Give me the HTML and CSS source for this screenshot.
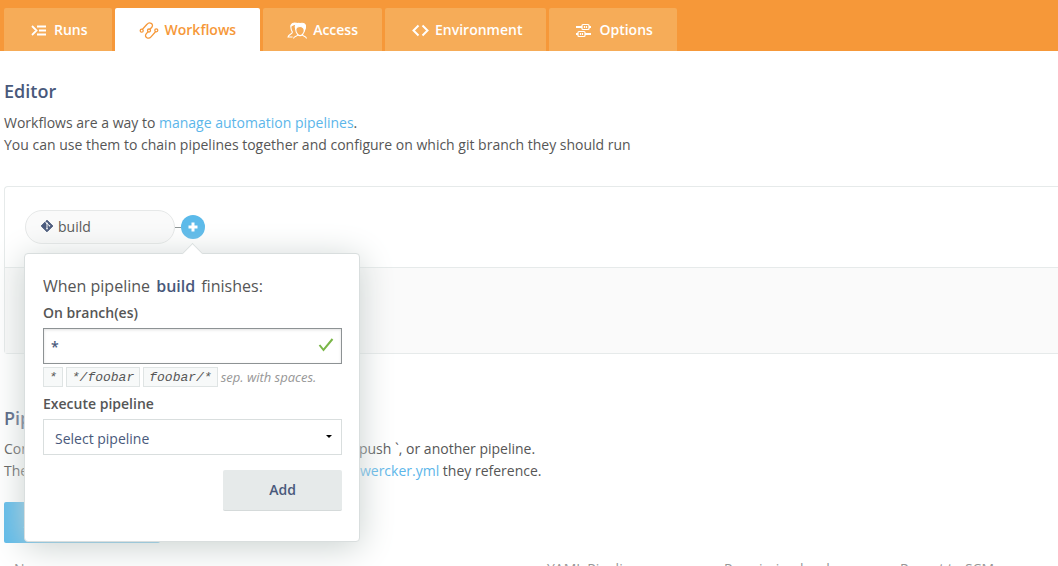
FILE: index.html
```html
<!DOCTYPE html>
<html lang="en">
<head>
<meta charset="utf-8">
<title>Workflows</title>
<link rel="stylesheet" href="styles.css">
</head>
<body>
<nav class="tabs" aria-label="Application">
  <a class="tab" href="#runs">
    <svg class="tab-icon" viewBox="0 0 20 20" fill="none" stroke="currentColor" stroke-width="1.800"><path d="M4 6l4.500 4.500L4 15M9 6.500h9M11 10.500h7M9 14.500h9"/></svg>
    Runs</a>
  <a class="tab tab-active" href="#workflows" aria-current="page">
    <svg class="tab-icon" viewBox="0 0 20 20" fill="none" stroke="currentColor" stroke-width="1.300"><circle cx="2.700" cy="10.700" r="1.500"/><circle cx="10" cy="10.500" r="1.500"/><circle cx="17.300" cy="10.300" r="1.500"/><path d="M3.500 9.300L8 4.300c2.500-3 7-.3 5 2.700L11 9.300M9 11.700l-2 2.500c-2 3 2.500 5.500 5 2.700L16.500 11.700"/></svg>
    Workflows</a>
  <a class="tab" href="#access">
    <svg class="tab-icon" viewBox="0 0 20 20" fill="none" stroke="currentColor" stroke-width="1.100"><path d="M8 4.500C5 3.500 3.500 5 4 8c0 2 1 3 1.300 4 .4 2-3.800 2.500-4.300 5h4.500M8.700 9c0 3 1 4.500 2 5.500.5 2-4 1.500-4.200 4M17.500 8.500c0 3.500-1 5-2 6 0 2 3.500 1.500 4 4M10.700 14.500c1.500 1.500 3.300 1.500 4.800 0"/><path fill="currentColor" d="M8.700 9C7.200 4.500 10 3 13 3.500c4-1 6 1 5.500 3.500 0 1.500-.5 2.500-1 3.500-.5-3-2-4-4.500-4-2 0-3.500.5-4.300 2.500zM4 6c0-2.500 2.500-3.500 5.500-2.700C8 4.500 6 5 4 6z"/></svg>
    Access</a>
  <a class="tab" href="#environment">
    <svg class="tab-icon" viewBox="0 0 20 20" fill="none" stroke="currentColor" stroke-width="2"><path d="M9.500 5.500l-5 5 5 5M13.500 5.500l5 5-5 5"/></svg>
    Environment</a>
  <a class="tab" href="#options">
    <svg class="tab-icon" viewBox="0 0 20 20" fill="none" stroke="currentColor" stroke-width="1.200"><path d="M3 7h6M16 7h2M3 14h2M12 14h6" stroke-width="2"/><rect x="9" y="4.500" width="7" height="5" rx="1"/><rect x="5" y="11.500" width="7" height="5" rx="1"/><path d="M11.500 6v2M13.500 6v2M7.500 13v2M9.500 13v2"/></svg>
    Options</a>
</nav>

<main class="page">
  <section class="intro">
    <h2 class="title">Editor</h2>
    <p class="text">Workflows are a way to <a class="link" href="#manage">manage automation pipelines</a>.<br>You can use them to chain pipelines together and configure on which git branch they should run</p>
  </section>

  <section class="board" aria-label="Workflow editor">
    <div class="board-row">
      <div class="chain">
        <a class="node" href="#build">
          <svg class="node-icon" viewBox="0 0 14 14"><path fill="currentColor" stroke="currentColor" stroke-linejoin="round" d="M7 1.200L12.800 7 7 12.800 1.200 7z"/><path d="M7 4v6M5 2.500l4.500 4.300" stroke="#fafafa" fill="none"/><circle cx="7" cy="4.300" r=".8" fill="#fafafa"/><circle cx="9.500" cy="6.800" r=".8" fill="#fafafa"/><circle cx="7" cy="9.800" r=".8" fill="#fafafa"/></svg>
          build</a>
        <span class="wire"></span>
        <button class="plus" type="button" aria-label="Add pipeline" aria-expanded="true">
          <svg class="plus-icon" viewBox="0 0 10 10"><path d="M5 .500v9M.500 5h9" stroke="currentColor" stroke-width="3"/></svg>
        </button>

        <form class="popover">
          <h3 class="popover-title">When pipeline <strong class="name">build</strong> finishes:</h3>
          <label class="label" for="branches">On branch(es)</label>
          <div class="field">
            <input class="control input" id="branches" type="text" value="*">
            <svg class="check" viewBox="0 0 16 16"><path d="M1.500 8l4 5L14.500 2" fill="none" stroke="currentColor" stroke-width="2"/></svg>
          </div>
          <p class="hint"><code class="code">*</code><code class="code">*/foobar</code><code class="code">foobar/*</code><span>sep. with spaces.</span></p>
          <label class="label" for="pipeline">Execute pipeline</label>
          <div class="field">
            <select class="control select" id="pipeline"><option>Select pipeline</option></select>
            <span class="caret"></span>
          </div>
          <button class="add" type="button">Add</button>
        </form>
      </div>
    </div>
    <div class="board-row board-row-empty"></div>
  </section>

  <section class="pipelines">
    <h2 class="title">Pipelines</h2>
    <p class="text">Configure your pipelines to be triggered by a fresh `git push `, or another pipeline.<br>The pipelines also execute the steps defined in the file <a class="link" href="#yml">wercker.yml</a> they reference.</p>
    <button class="primary" type="button">Add new pipeline</button>
    <table class="list">
      <thead><tr><th class="col-name">Name</th><th class="col-yaml">YAML Pipeline</th><th class="col-level">Permission level</th><th>Report to SCM</th></tr></thead>
    </table>
  </section>
</main>
</body>
</html>
```

FILE: styles.css
```css
* {
  box-sizing: border-box;
}

body {
  margin: 0;
  background: #fff;
  color: #565656;
  font: 14px/22px "Open Sans", "Noto Sans", sans-serif;
}

button,
input,
select {
  font: inherit;
}

.tabs {
  display: flex;
  gap: 3px;
  padding: 8px 4px 0;
  background: #f69839;
}

.tab {
  display: flex;
  align-items: center;
  gap: 6px;
  height: 43px;
  padding: 0 24px;
  border-radius: 2px 2px 0 0;
  background: #f6ac58;
  color: #fff;
  font-weight: 600;
  text-decoration: none;
}

.tab-active {
  background: #fff;
  color: #f69839;
}

.tab-icon {
  width: 20px;
  height: 20px;
}

.page {
  padding: 28px 0 0 4px;
}

.title {
  margin: 0 0 8px;
  color: #49597b;
  font-size: 18px;
  font-weight: 600;
  line-height: 25px;
}

.text {
  margin: 0;
}

.link {
  color: #5cb6ea;
  text-decoration: none;
}

.board {
  margin-top: 30px;
  border: 1px solid #e6eaea;
  border-right: 0;
  border-radius: 4px 0 0 4px;
}

.board-row {
  padding: 23px 20px;
}

.board-row-empty {
  height: 86px;
  border-top: 1px solid #e6eaea;
  background: #fafafa;
}

.chain {
  position: relative;
  display: flex;
  align-items: center;
}

.node {
  display: flex;
  align-items: center;
  gap: 4px;
  width: 150px;
  height: 34px;
  padding: 0 14px;
  border: 1px solid #e6e8e8;
  border-radius: 17px;
  background: #fafafa;
  color: #565656;
  text-decoration: none;
}

.node-icon {
  width: 14px;
  height: 14px;
  margin-bottom: 3px;
  color: #49597b;
}

.wire {
  width: 6px;
  height: 1px;
  background: #8d9494;
}

.plus {
  display: flex;
  align-items: center;
  justify-content: center;
  width: 24px;
  height: 24px;
  padding: 0;
  border: 0;
  border-radius: 50%;
  background: #5bbaea;
  color: #fff;
}

.plus-icon {
  width: 10px;
  height: 10px;
}

.popover {
  position: absolute;
  z-index: 1;
  top: 43px;
  left: -1px;
  display: flex;
  flex-direction: column;
  width: 336px;
  padding: 20px 17px 30px 18px;
  border: 1px solid #d9dede;
  border-radius: 4px;
  background: #fff;
  box-shadow: 0 5px 35px rgb(200, 208, 206);
}

.popover::before {
  position: absolute;
  top: -8px;
  left: 160px;
  width: 14px;
  height: 14px;
  border: 1px solid #d9dede;
  border-right: 0;
  border-bottom: 0;
  background: #fff;
  content: "";
  transform: rotate(45deg);
}

.popover-title {
  margin: 0 0 4px;
  font-size: 16px;
  font-weight: 400;
  line-height: 24px;
}

.name {
  margin: 0 2px;
  color: #49597b;
  font-weight: 600;
}

.label {
  font-weight: 600;
}

.field {
  position: relative;
  margin-top: 4px;
}

.control {
  display: block;
  width: 100%;
  height: 36px;
  margin: 0;
  background: #fff;
  color: #49597b;
}

.input {
  padding: 0 32px 0 7px;
  border: 1px solid #8d9294;
  border-radius: 0;
  box-shadow: inset 0 1px 3px rgba(0, 0, 0, 0.12);
  font-weight: 600;
}

.check {
  position: absolute;
  top: 9px;
  right: 8px;
  width: 16px;
  height: 16px;
  color: #7ab648;
}

.hint {
  display: flex;
  gap: 3px;
  margin: 2px 0 5px;
  color: #979797;
  font-size: 13px;
  font-style: italic;
}

.code {
  height: 20px;
  margin-top: 1px;
  padding: 0 5px;
  border: 1px solid #dfe4e4;
  background: #f7f9f9;
  color: #565656;
  font: italic 13px/19px "Liberation Mono", monospace;
}

.select {
  padding: 4px 28px 0 11px;
  border: 1px solid #d9dede;
  border-radius: 0;
  appearance: none;
}

.caret {
  position: absolute;
  top: 16px;
  right: 10px;
  border: 3px solid transparent;
  border-top-color: #000;
  border-bottom: 0;
  pointer-events: none;
}

.add {
  align-self: flex-end;
  width: 119px;
  height: 41px;
  margin-top: 15px;
  padding: 0;
  border: 0;
  border-bottom: 1px solid #d5dada;
  border-radius: 2px;
  background: #e6eaea;
  color: #49597b;
  font-weight: 600;
}

.pipelines {
  padding-top: 52px;
}

.pipelines .title {
  margin-bottom: 7px;
}

.primary {
  display: block;
  width: 156px;
  height: 41px;
  margin-top: 20px;
  padding: 0;
  border: 0;
  border-radius: 2px;
  background: #5bbaea;
  color: #fff;
  font-weight: 600;
}

.list {
  width: 100%;
  margin-top: 15px;
  border-collapse: collapse;
  table-layout: fixed;
  color: #979797;
  text-align: left;
}

.list th {
  padding: 0 0 0 10px;
  font-weight: 400;
}

.col-name {
  width: 533px;
}

.col-yaml {
  width: 177px;
}

.col-level {
  width: 176px;
}
```
